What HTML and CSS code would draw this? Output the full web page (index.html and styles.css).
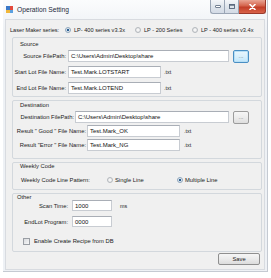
FILE: index.html
```html
<!DOCTYPE html>
<html lang="en">

<head>
    <meta charset="UTF-8">
    <title>Operation Setting</title>
    <link rel="stylesheet" href="styles.css">
</head>

<body>
    <div class="window">
        <div class="titlebar">
            <span class="app-icon"><i class="c1"></i><i class="c2"></i><i class="c3"></i><i class="c4"></i></span>
            <span class="title">Operation Setting</span>
            <div class="caption">
                <span class="cap-btn min"><svg width="6" height="3" viewBox="0 0 6 3"><rect x="0.5" y="0.5" width="5" height="2" rx="0.5" fill="#fff" stroke="#56657a" stroke-width="0.8"/></svg></span>
                <span class="cap-btn max"><svg width="6" height="5" viewBox="0 0 6 5"><rect x="0.5" y="0.5" width="5" height="4" fill="none" stroke="#56657a" stroke-width="0.9"/><rect x="0.5" y="0.5" width="5" height="1.2" fill="#56657a"/></svg></span>
                <span class="cap-btn close"><svg width="7" height="6" viewBox="0 0 7 6"><path d="M1 0.5 L6 5.5 M6 0.5 L1 5.5" stroke="#fff" stroke-width="1.6" stroke-linecap="round"/></svg></span>
            </div>
        </div>
        <div class="client">
            <div class="series">
                <span class="series-label">Laser Maker series:</span>
                <span class="opt opt-a"><span class="radio checked"></span>LP- 400 series v3.3x</span>
                <span class="opt opt-b"><span class="radio"></span>LP - 200 Series</span>
                <span class="opt"><span class="radio"></span>LP - 400 series v3.4x</span>
            </div>

            <div class="group g-source">
                <div class="legend">Source</div>
                <div class="row row-path">
                    <span class="lbl">Source FilePath:</span>
                    <span class="input path">C:\Users\Admin\Desktop\share</span>
                    <span class="browse focus">...</span>
                </div>
                <div class="row r2">
                    <span class="lbl">Start Lot File Name:</span>
                    <span class="input name">Test.Mark.LOTSTART</span>
                    <span class="ext">.txt</span>
                </div>
                <div class="row r3">
                    <span class="lbl">End Lot File Name:</span>
                    <span class="input name">Test.Mark.LOTEND</span>
                    <span class="ext">.txt</span>
                </div>
            </div>

            <div class="group g-dest">
                <div class="legend">Destination</div>
                <div class="row row-path">
                    <span class="lbl">Destination FilePath:</span>
                    <span class="input path">C:\Users\Admin\Desktop\share</span>
                    <span class="browse">...</span>
                </div>
                <div class="row r2">
                    <span class="lbl">Result " Good " File Name:</span>
                    <span class="input name">Test.Mark_OK</span>
                    <span class="ext">.txt</span>
                </div>
                <div class="row r3">
                    <span class="lbl">Result "Error " File Name:</span>
                    <span class="input name">Test.Mark_NG</span>
                    <span class="ext">.txt</span>
                </div>
            </div>

            <div class="group g-weekly">
                <div class="legend">Weekly Code</div>
                <div class="row">
                    <span class="lbl">Weekly Code Line Pattern:</span>
                    <span class="opt opt-single"><span class="radio"></span>Single Line</span>
                    <span class="opt"><span class="radio checked"></span>Multiple Line</span>
                </div>
            </div>

            <div class="group g-other">
                <div class="legend">Other</div>
                <div class="row r-scan">
                    <span class="lbl">Scan Time:</span>
                    <span class="input short">1000</span>
                    <span class="ext">ms</span>
                </div>
                <div class="row r-endlot">
                    <span class="lbl">EndLot Program:</span>
                    <span class="input short">0000</span>
                </div>
                <div class="row r-check">
                    <span class="checkbox"></span>Enable Create Recipe from DB
                </div>
            </div>

            <div class="actions">
                <span class="save">Save</span>
            </div>
        </div>
    </div>
</body>

</html>
```

FILE: styles.css
```css
* {
    margin: 0;
    padding: 0;
    box-sizing: border-box;
}

body {
    width: 271px;
    height: 278px;
    overflow: hidden;
    background-color: #fff;
    font-family: "Liberation Sans", Arial, sans-serif;
    color: #222;
}

.window {
    margin-left: 3px;
    width: 265px;
    height: 272px;
    background: linear-gradient(#fbfcfd, #eef1f5 30px, #eef1f5);
    border-right: 1px solid #c5cad2;
    border-bottom: 1px solid #c5cad2;
}

/* title bar */
.titlebar {
    height: 19px;
    display: flex;
    align-items: center;
    padding-left: 3px;
}

.app-icon {
    width: 7px;
    height: 7px;
    display: flex;
    flex-wrap: wrap;
}

.app-icon i {
    width: 3.5px;
    height: 3.5px;
}

.app-icon .c1 { background-color: #3a78c8; }
.app-icon .c2 { background-color: #e34a3c; }
.app-icon .c3 { background-color: #f0b73a; }
.app-icon .c4 { background-color: #5aa0e0; }

.title {
    margin-left: 4px;
    font-size: 6.7px;
    color: #1e2a3a;
}

.caption {
    margin-left: auto;
    margin-right: 1px;
    align-self: flex-start;
    display: flex;
}

.cap-btn {
    height: 14px;
    display: flex;
    align-items: center;
    justify-content: center;
    border: 1px solid #9aa5b5;
    border-top: none;
}

.cap-btn.min {
    width: 14px;
    border-radius: 0 0 0 3px;
    border-right: none;
    background: linear-gradient(#f4f6f9, #dfe5ec 50%, #d3dbe6);
}

.cap-btn.max {
    width: 15px;
    background: linear-gradient(#f4f6f9, #dfe5ec 50%, #d3dbe6);
}

.cap-btn.close {
    width: 27px;
    border-color: #9b3a2c;
    border-left: none;
    border-radius: 0 0 3px 0;
    background: linear-gradient(#e9a594, #d4634c 45%, #c23e28 55%, #d8634a);
}

/* client area */
.client {
    margin-left: 2px;
    width: 260px;
    height: 251px;
    background-color: #f0f0f0;
    border: 1px solid #d8dbe0;
    font-size: 5.8px;
}

.series {
    margin-top: 5px;
    height: 9px;
    padding-left: 4px;
    display: flex;
    align-items: center;
    font-size: 5.6px;
}

.series-label {
    width: 55px;
}

.opt {
    display: flex;
    align-items: center;
}

.opt-a {
    width: 70px;
}

.opt-b {
    width: 57px;
}

.radio {
    width: 6px;
    height: 6px;
    margin-right: 3px;
    border-radius: 50%;
    border: 1px solid #b4b8bd;
    background: radial-gradient(circle, #f6f6f6 30%, #d7d9dc);
}

.radio.checked {
    border-color: #8ea6bc;
    background: radial-gradient(circle, #173f6a 0, #2f6aa3 35%, #dfe6ee 55%);
}

/* group boxes */
.group {
    margin-left: 6px;
    margin-top: 3px;
    width: 250px;
    border: 1px solid #d3d8dd;
    border-radius: 2px;
}

.legend {
    height: 7px;
    line-height: 7px;
    padding-left: 7px;
}

.row {
    display: flex;
    align-items: center;
    height: 12px;
}

.lbl {
    text-align: right;
    white-space: nowrap;
}

.input {
    height: 12px;
    line-height: 11px;
    padding-left: 2px;
    font-size: 6px;
    color: #111;
    background-color: #fff;
    border: 1px solid #c8ccd2;
    border-top-color: #a9aeb6;
    white-space: nowrap;
    overflow: hidden;
}

.ext {
    font-size: 5.4px;
}

.browse {
    margin-left: 4px;
    width: 16px;
    height: 13px;
    line-height: 10px;
    text-align: center;
    color: #777;
    font-size: 6px;
    border: 1px solid #9c9c9c;
    border-radius: 2px;
    background: linear-gradient(#f6f6f6, #ececec 50%, #dedede);
}

.browse.focus {
    border-color: #4a8fc4;
    background: linear-gradient(#eaf6fd, #d9f0fc 50%, #bee6fd);
    box-shadow: inset 0 0 0 1px #b8dff5;
}

/* source */
.g-source {
    height: 60px;
    padding-top: 3px;
}

.g-source .row-path {
    margin-top: 1px;
    height: 14px;
}

.g-source .lbl {
    width: 53px;
}

.g-source .input {
    margin-left: 2px;
}

.g-source .input.path {
    width: 161px;
}

.g-source .input.name {
    width: 93px;
}

.g-source .ext {
    margin-left: 3px;
}

.g-source .r2 {
    margin-top: 3px;
}

.g-source .r3 {
    margin-top: 4px;
}

/* destination */
.g-dest {
    height: 59px;
    padding-top: 1px;
}

.g-dest .row-path {
    margin-top: 1px;
    height: 14px;
}

.g-dest .row-path .lbl {
    width: 61px;
}

.g-dest .input {
    margin-left: 1px;
}

.g-dest .input.path {
    width: 154px;
}

.g-dest .lbl {
    width: 73px;
}

.g-dest .input.name {
    width: 93px;
}

.g-dest .ext {
    margin-left: 4px;
}

.g-dest .r2 {
    margin-top: 1px;
}

.g-dest .r3 {
    margin-top: 2px;
}

/* weekly code */
.g-weekly {
    height: 28px;
}

.g-weekly .row {
    margin-top: 6px;
    height: 8px;
    padding-left: 8px;
}

.g-weekly .lbl {
    width: 86px;
    text-align: left;
}

.g-weekly .radio {
    margin-right: 2px;
}

.opt-single {
    width: 70px;
}

/* other */
.g-other {
    height: 59px;
}

.g-other .legend {
    height: 6px;
    line-height: 6px;
    padding-left: 4px;
}

.g-other .row {
    height: 11px;
}

.g-other .lbl {
    width: 55px;
}

.input.short {
    margin-left: 4px;
    width: 40px;
    height: 11px;
    line-height: 10px;
}

.r-scan .ext {
    margin-left: 8px;
}

.g-other .r-endlot {
    margin-top: 5px;
}

.g-other .r-check {
    margin-top: 10px;
    height: 8px;
    padding-left: 10px;
}

.checkbox {
    width: 7px;
    height: 7px;
    margin-right: 4px;
    border: 1px solid #9a9ea4;
    background: linear-gradient(135deg, #d9dbde, #f7f7f7);
}

/* bottom button */
.actions {
    margin-top: 1px;
    padding-left: 212px;
}

.save {
    display: block;
    width: 42px;
    height: 12px;
    line-height: 10px;
    text-align: center;
    font-size: 5.8px;
    border: 1px solid #8f8f8f;
    border-radius: 2px;
    background: linear-gradient(#f6f6f6, #ebebeb 50%, #dcdcdc);
}
```
